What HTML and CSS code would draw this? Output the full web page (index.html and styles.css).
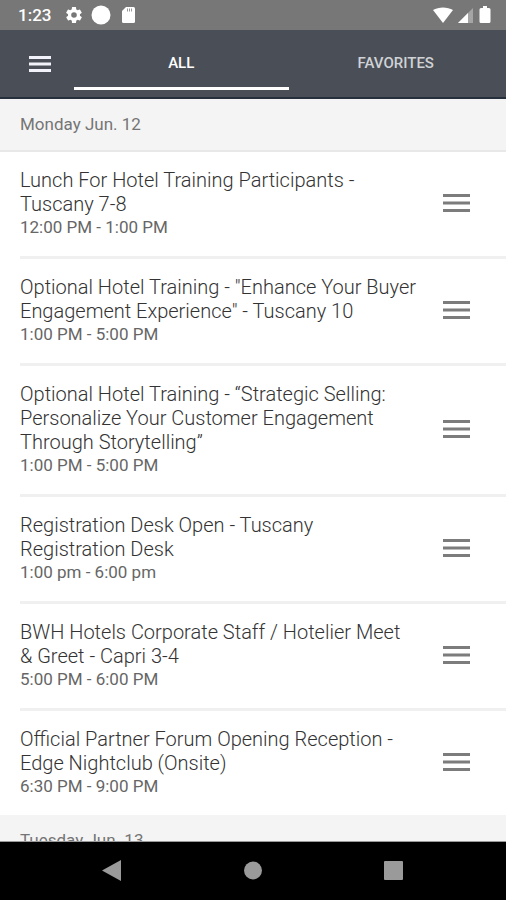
FILE: index.html
```html
<!DOCTYPE html>
<html lang="en">
<head>
    <meta charset="UTF-8">
    <meta name="viewport" content="width=device-width, initial-scale=1.0">
    <title>Schedule</title>
    <link rel="stylesheet" href="styles.css">
</head>
<body>

<!-- Status bar -->
<div class="status-bar">
    <span class="clock">1:23</span>
    <div class="status-left">
        <svg width="16" height="16" viewBox="2 2 20 20"><path fill="#fff" d="M19.4 13a7.5 7.5 0 0 0 0-2l2.1-1.6a.5.5 0 0 0 .1-.6l-2-3.5a.5.5 0 0 0-.6-.2l-2.5 1a7.3 7.3 0 0 0-1.7-1L14.5 2.4A.5.5 0 0 0 14 2h-4a.5.5 0 0 0-.5.4l-.4 2.7a7.7 7.7 0 0 0-1.7 1l-2.5-1a.5.5 0 0 0-.6.2l-2 3.5a.5.5 0 0 0 .1.6L4.6 11a8 8 0 0 0 0 2l-2.1 1.6a.5.5 0 0 0-.1.6l2 3.5c.1.2.4.3.6.2l2.5-1c.5.4 1.1.7 1.7 1l.3 2.7c0 .2.2.4.5.4h4c.3 0 .5-.2.5-.4l.4-2.7a7.3 7.3 0 0 0 1.7-1l2.5 1c.2.1.5 0 .6-.2l2-3.5a.5.5 0 0 0-.1-.6zM12 15.5a3.5 3.5 0 1 1 0-7 3.5 3.5 0 0 1 0 7z"/></svg>
        <svg width="20" height="20" viewBox="0 0 20 20"><circle cx="10" cy="10" r="9.5" fill="#fff"/></svg>
        <svg width="16" height="18" viewBox="0 0 16 18"><path fill="#fff" d="M6 1h7.500a1.500 1.500 0 0 1 1.500 1.500v13a1.500 1.500 0 0 1-1.500 1.500h-10A1.500 1.500 0 0 1 2 15.500V5z"/><path stroke="#999" stroke-width="1" d="M7.500 2.500v3M9.500 2.500v3M11.500 2.500v3"/></svg>
    </div>
    <div class="status-right">
        <svg width="20" height="18" viewBox="0 0 20 18"><path fill="#fff" d="M0 4C5.500.5 14.500.5 20 4L10 17z"/></svg>
        <svg width="16" height="18" viewBox="0 0 16 18"><path fill="#a5a5a5" d="M15 2v15H0z"/><path fill="#fff" d="M10 7v10H0z"/></svg>
        <svg width="12" height="18" viewBox="0 0 12 18"><path fill="#fff" d="M4 0h4v2h2a1.500 1.500 0 0 1 1.500 1.500v12A1.500 1.500 0 0 1 10 17H2a1.500 1.500 0 0 1-1.500-1.500v-12A1.500 1.500 0 0 1 2 2h2z"/></svg>
    </div>
</div>

<!-- Tabs -->
<header class="app-bar">
    <button class="menu-button" aria-label="Menu">
        <svg width="24" height="18" viewBox="0 0 24 18"><path stroke="#f2f3fa" stroke-width="3" d="M1 2.500h22M1 9h22M1 15.500h22"/></svg>
    </button>
    <nav class="tabs">
        <button class="tab active">ALL</button>
        <button class="tab">FAVORITES</button>
    </nav>
</header>

<!-- Schedule -->
<main class="schedule">
    <h2 class="day">Monday Jun. 12</h2>
    <ul class="events">
        <li class="event">
            <div class="event-text">
                <h3>Lunch For Hotel Training Participants - Tuscany 7-8</h3>
                <p>12:00 PM - 1:00 PM</p>
            </div>
            <button class="handle" aria-label="Options"><svg width="28" height="20" viewBox="0 0 28 20"><path stroke="#7c7c7c" stroke-width="3" d="M0 2.500h27M0 10h27M0 17.500h27"/></svg></button>
        </li>
        <li class="event">
            <div class="event-text">
                <h3>Optional Hotel Training - "Enhance Your Buyer Engagement Experience" - Tuscany 10</h3>
                <p>1:00 PM - 5:00 PM</p>
            </div>
            <button class="handle" aria-label="Options"><svg width="28" height="20" viewBox="0 0 28 20"><path stroke="#7c7c7c" stroke-width="3" d="M0 2.500h27M0 10h27M0 17.500h27"/></svg></button>
        </li>
        <li class="event">
            <div class="event-text">
                <h3>Optional Hotel Training - “Strategic Selling: Personalize Your Customer Engagement Through Storytelling”</h3>
                <p>1:00 PM - 5:00 PM</p>
            </div>
            <button class="handle" aria-label="Options"><svg width="28" height="20" viewBox="0 0 28 20"><path stroke="#7c7c7c" stroke-width="3" d="M0 2.500h27M0 10h27M0 17.500h27"/></svg></button>
        </li>
        <li class="event">
            <div class="event-text">
                <h3>Registration Desk Open - Tuscany Registration Desk</h3>
                <p>1:00 pm - 6:00 pm</p>
            </div>
            <button class="handle" aria-label="Options"><svg width="28" height="20" viewBox="0 0 28 20"><path stroke="#7c7c7c" stroke-width="3" d="M0 2.500h27M0 10h27M0 17.500h27"/></svg></button>
        </li>
        <li class="event">
            <div class="event-text">
                <h3>BWH Hotels Corporate Staff / Hotelier Meet &amp; Greet - Capri 3-4</h3>
                <p>5:00 PM - 6:00 PM</p>
            </div>
            <button class="handle" aria-label="Options"><svg width="28" height="20" viewBox="0 0 28 20"><path stroke="#7c7c7c" stroke-width="3" d="M0 2.500h27M0 10h27M0 17.500h27"/></svg></button>
        </li>
        <li class="event">
            <div class="event-text">
                <h3>Official Partner Forum Opening Reception - Edge Nightclub (Onsite)</h3>
                <p>6:30 PM - 9:00 PM</p>
            </div>
            <button class="handle" aria-label="Options"><svg width="28" height="20" viewBox="0 0 28 20"><path stroke="#7c7c7c" stroke-width="3" d="M0 2.500h27M0 10h27M0 17.500h27"/></svg></button>
        </li>
    </ul>
    <h2 class="day">Tuesday Jun. 13</h2>
</main>

<!-- System navigation -->
<footer class="nav-bar">
    <button aria-label="Back"><svg width="22" height="22" viewBox="0 0 22 22"><path fill="#9a9a9a" d="M19 0v21L0 10.500z"/></svg></button>
    <button aria-label="Home"><svg width="22" height="22" viewBox="0 0 22 22"><circle cx="11" cy="10.500" r="9" fill="#9a9a9a"/></svg></button>
    <button aria-label="Recent"><svg width="22" height="22" viewBox="0 0 22 22"><rect x="2" y="1" width="19" height="19" rx="1" fill="#9a9a9a"/></svg></button>
</footer>

</body>
</html>
```
FILE: styles.css
```css
* {
    box-sizing: border-box;
}

body {
    margin: 0;
    height: 100vh;
    display: flex;
    flex-direction: column;
    overflow: hidden;
    background-color: #fff;
    font-family: Roboto, sans-serif;
    color: #555;
}

button {
    padding: 0;
    border: none;
    background: none;
    font-family: inherit;
    cursor: pointer;
}

svg {
    display: block;
}

h2, h3, p, ul {
    margin: 0;
    padding: 0;
    font-weight: 300;
}

.status-bar {
    flex: none;
    display: flex;
    align-items: center;
    height: 30px;
    padding: 0 15px 0 18px;
    background-color: #777;
    color: #fff;
}

.clock {
    font-size: 17px;
    font-weight: 500;
    line-height: 30px;
}

.status-left {
    display: flex;
    align-items: center;
    gap: 9px;
    margin-left: 15px;
}

.status-right {
    display: flex;
    align-items: center;
    gap: 5px;
    margin-left: auto;
}

.app-bar {
    flex: none;
    display: flex;
    height: 69px;
    background-color: #4a4f57;
    border-bottom: 2px solid #26303c;
}

.menu-button {
    width: 74px;
    padding-left: 28px;
}

.tabs {
    flex: 1;
    display: flex;
    padding-right: 3px;
}

.tab {
    flex: 1;
    height: 60px;
    padding-top: 8px;
    border-bottom: 3px solid transparent;
    color: #d0d2d5;
    font-size: 15px;
    font-weight: 500;
}

.tab.active {
    border-bottom-color: #fff;
    color: #fff;
}

.schedule {
    flex: 1;
    overflow: hidden;
    border-bottom: 1px solid #999;
}

.day {
    height: 53px;
    padding-left: 20px;
    background-color: #f4f4f4;
    border-bottom: 2px solid #e8e8e8;
    font-size: 17px;
    font-weight: 400;
    line-height: 50px;
    color: #757575;
}

.events {
    list-style: none;
}

.event {
    display: flex;
    align-items: center;
    justify-content: space-between;
    margin-left: 20px;
    padding: 16px 35px 18px 0;
    border-bottom: 3px solid #f0f0f0;
}

.event:last-child {
    border-bottom: none;
}

.event-text {
    flex: 1;
    max-width: 397px;
}

.event h3 {
    font-size: 20px;
    line-height: 24px;
    color: #333;
}

.event p {
    font-size: 17px;
    font-weight: 400;
    line-height: 22px;
    color: #666;
}

.nav-bar {
    flex: none;
    display: flex;
    justify-content: center;
    align-items: center;
    gap: 118px;
    height: 58px;
    background-color: #000;
}
```
